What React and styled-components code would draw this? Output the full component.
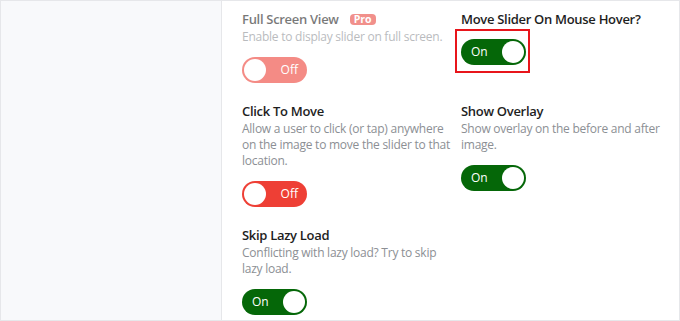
import React from 'react';
import styled, { createGlobalStyle } from 'styled-components';

const GlobalStyle = createGlobalStyle`
  html, body {
    margin: 0;
    padding: 0;
    background: #ffffff;
  }
  body {
    font-family: "Open Sans", "Noto Sans", sans-serif;
  }
`;

const Frame = styled.div`
  width: 680px;
  height: 321px;
  box-sizing: border-box;
  border: 1px solid #e6e7ea;
  display: flex;
  overflow: hidden;
`;

const Sidebar = styled.div`
  width: 220px;
  flex-shrink: 0;
  background: #f8f9fb;
  border-right: 1px solid #e6e7ea;
`;

const Content = styled.div`
  flex: 1;
  display: grid;
  grid-template-columns: 219px 1fr;
  row-gap: 18px;
  align-content: start;
  padding: 8px 0 0 20px;
`;

const Setting = styled.div`
  display: flex;
  flex-direction: column;
  align-items: flex-start;
  opacity: ${(p) => (p.$disabled ? 0.6 : 1)};
  padding-right: 6px;
`;

const Title = styled.div`
  display: flex;
  align-items: center;
  gap: 11px;
  font-size: 13px;
  letter-spacing: -0.3px;
  font-weight: 600;
  color: #1e1e1e;
  line-height: 20px;
`;

const ProBadge = styled.span`
  background: #e8483f;
  color: #ffffff;
  font-size: 10.5px;
  font-weight: 700;
  letter-spacing: 0;
  line-height: 11px;
  padding: 0 4px;
  border-radius: 4px;
`;

const Desc = styled.div`
  font-size: 12px;
  letter-spacing: -0.25px;
  color: #8c8f94;
  line-height: 16px;
`;

const Switch = styled.div`
  margin-top: ${(p) => (p.$tight ? '0' : '12px')};
  width: 65px;
  height: 26px;
  border-radius: 13px;
  box-sizing: border-box;
  background: ${(p) => (p.$on ? '#056708' : '#ee3f35')};
  display: flex;
  flex-direction: ${(p) => (p.$on ? 'row' : 'row-reverse')};
  align-items: center;
  justify-content: space-between;
  padding: ${(p) => (p.$on ? '0 2px 0 10px' : '0 9px 0 2px')};
`;

const Knob = styled.span`
  width: 22px;
  height: 22px;
  border-radius: 50%;
  background: #ffffff;
`;

const SwitchLabel = styled.span`
  color: #ffffff;
  font-size: 12px;
  line-height: 1;
`;

const Highlight = styled.div`
  margin-left: -6px;
  border: 2px solid #e8151b;
  padding: 8px 2px 6px 4px;
  display: flex;
`;

function Toggle({ on, tight }) {
  return (
    <Switch $on={on} $tight={tight}>
      <SwitchLabel>{on ? 'On' : 'Off'}</SwitchLabel>
      <Knob />
    </Switch>
  );
}

export default function App() {
  return (
    <>
      <GlobalStyle />
      <Frame>
        <Sidebar />
        <Content>
          <Setting $disabled>
            <Title>
              Full Screen View <ProBadge>Pro</ProBadge>
            </Title>
            <Desc>Enable to display slider on full screen.</Desc>
            <Toggle on={false} />
          </Setting>
          <Setting>
            <Title>Move Slider On Mouse Hover?</Title>
            <Highlight>
              <Toggle on tight />
            </Highlight>
          </Setting>
          <Setting>
            <Title>Click To Move</Title>
            <Desc>Allow a user to click (or tap) anywhere on the image to move the slider to that location.</Desc>
            <Toggle on={false} />
          </Setting>
          <Setting>
            <Title>Show Overlay</Title>
            <Desc>Show overlay on the before and after image.</Desc>
            <Toggle on />
          </Setting>
          <Setting>
            <Title>Skip Lazy Load</Title>
            <Desc>Conflicting with lazy load? Try to skip lazy load.</Desc>
            <Toggle on />
          </Setting>
        </Content>
      </Frame>
    </>
  );
}
